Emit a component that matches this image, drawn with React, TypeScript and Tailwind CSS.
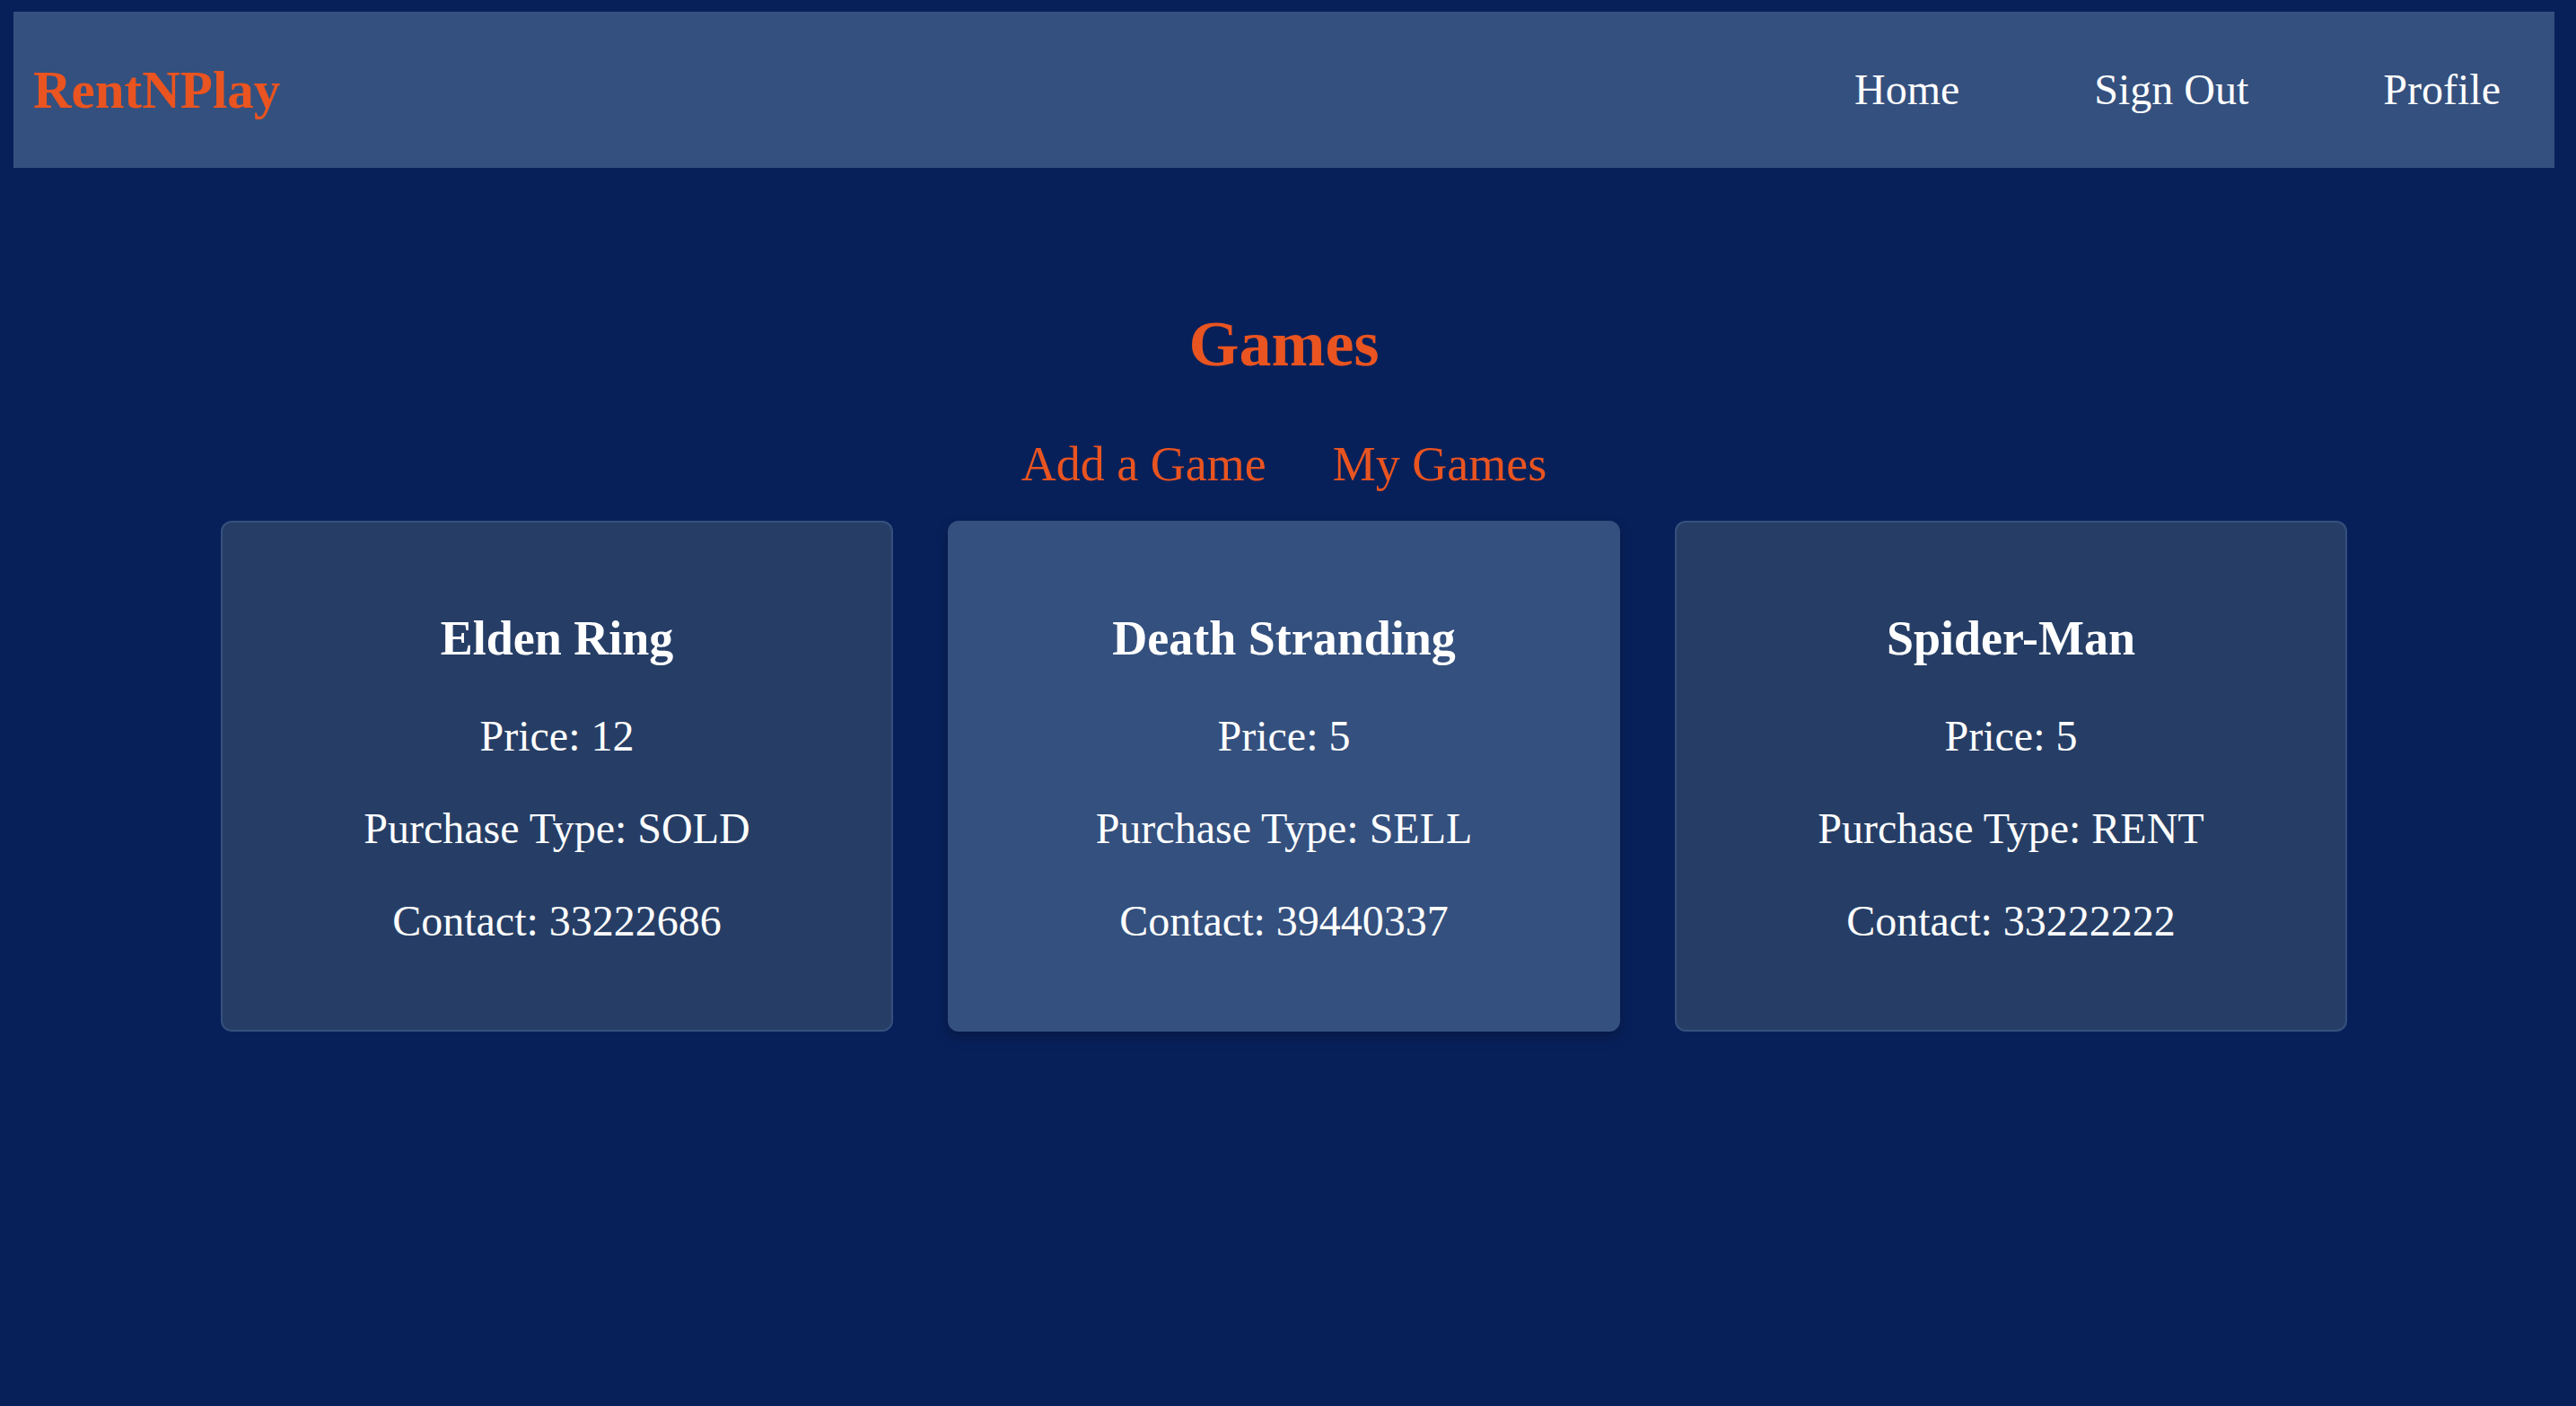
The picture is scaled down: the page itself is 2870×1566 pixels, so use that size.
const games = [
  { title: "Elden Ring", price: 12, type: "SOLD", contact: "33222686" },
  { title: "Death Stranding", price: 5, type: "SELL", contact: "39440337", active: true },
  { title: "Spider-Man", price: 5, type: "RENT", contact: "33222222" },
];

function Navbar() {
  return (
    <nav className="h-[174px] bg-[#34507e] flex items-center justify-between pl-[22px] pr-[60px]">
      <div className="text-[59px] font-bold text-[#e95420] leading-none">RentNPlay</div>
      <div className="flex items-center gap-[150px] text-[48px] text-white leading-none">
        <a>Home</a>
        <a>Sign Out</a>
        <a>Profile</a>
      </div>
    </nav>
  );
}

function GameCard({ game }: { game: (typeof games)[number] }) {
  return (
    <div
      className={
        game.active
          ? "w-[749px] rounded-[12px] border-2 border-[#34507e] bg-[#34507e] shadow-[0_6px_14px_rgba(0,0,0,0.25)] flex flex-col items-center pt-[98px] pb-[94px] text-white"
          : "w-[749px] rounded-[12px] border-2 border-[#36507d] bg-[#263e66] flex flex-col items-center pt-[98px] pb-[94px] text-white"
      }
    >
      <h3 className="text-[54px] font-bold leading-[62px] mb-[50px]">{game.title}</h3>
      <div className="flex flex-col items-center gap-[48px] text-[48px] leading-[55px]">
        <p>Price: {game.price}</p>
        <p>Purchase Type: {game.type}</p>
        <p>Contact: {game.contact}</p>
      </div>
    </div>
  );
}

export default function App() {
  return (
    <div className="min-h-screen bg-[#08205a] pt-[13px] pl-[15px] pr-[24px] font-['Liberation_Serif','Times_New_Roman',serif]">
      <Navbar />
      <h1 className="mt-[155px] text-center text-[72px] font-bold leading-[83px] text-[#e95420]">Games</h1>
      <div className="mt-[61px] flex justify-center gap-[74px] text-[54px] leading-[62px] text-[#e95420]">
        <a>Add a Game</a>
        <a>My Games</a>
      </div>
      <div className="mt-[32px] flex justify-center gap-[61px]">
        {games.map((g) => (
          <GameCard key={g.title} game={g} />
        ))}
      </div>
    </div>
  );
}
